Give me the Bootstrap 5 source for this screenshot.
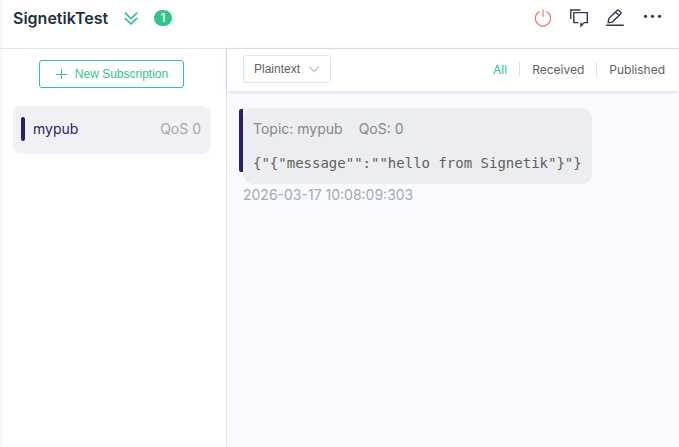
<!DOCTYPE html>
<html lang="en">
<head>
<meta charset="utf-8">
<meta name="viewport" content="width=device-width, initial-scale=1">
<title>SignetikTest</title>
<link href="https://cdn.jsdelivr.net/npm/bootstrap@5.3.0/dist/css/bootstrap.min.css" rel="stylesheet">
<style>
  body { font-family: Inter, "Liberation Sans", sans-serif; font-size: 14px; line-height: 20px; color: #606266; background: #fff; }
  .edge-shade { background: linear-gradient(to right, #f6f7fb, #fff 5px); }
  .rule-color { border-color: #e2e2ef !important; }
  .topbar { min-height: 49px; padding: 5px 16px 17px 13px; }
  .conn-name { font-size: 16px; line-height: 24px; font-weight: 600; color: #262e3f; }
  .icon-btn { padding: 0; border: 0; line-height: 0; color: #33384c; background: none; }
  .icon-btn.off { color: #f56c6c; }
  .green { color: #34c388; }
  .count { min-width: 18px; padding: 0 6px; font-size: 12px; line-height: 16px; font-weight: 500; background: #34c388; }
  .tools { gap: 18px; }
  .subs { width: 227px; padding: 11px 16px 16px 13px; }
  .new-sub { width: 145px; height: 28px; padding: 0; font: 12px/16px "Liberation Sans", Arial, sans-serif; color: #34c388; border: 1px solid #34c388; border-radius: 3px; background: #fff; }
  .new-sub:hover { color: #fff; background: #34c388; }
  .topic { margin-top: 18px; padding: 11px 9px 12px 8px; border: 0; border-radius: 8px; background: #f1f0f5; box-shadow: 0 1px 3px rgba(0,0,0,.05); }
  .topic-bar { width: 4px; height: 24px; border-radius: 2px; background: #282263; }
  .topic-name { color: #282263; }
  .faint { color: #a2a9b0; }
  .messages { background: #f9faff; }
  .filterbar { min-height: 42px; padding: 6px 14px 8px 16px; background: #fff; box-shadow: 0 1px 4px rgba(20,20,50,.14); }
  .format { width: 88px; height: 28px; padding: 0 24px 0 10px; font: 12px/16px "Liberation Sans", Arial, sans-serif; color: #606266; border: 1px solid #e2e2ef; border-radius: 3px;
    background: #fff url("data:image/svg+xml,%3Csvg xmlns='http://www.w3.org/2000/svg' width='12' height='12' viewBox='0 0 12 12'%3E%3Cpath d='M1 3.5l5 5 5-5' fill='none' stroke='%23c0c4cc' stroke-width='1.3'/%3E%3C/svg%3E") no-repeat right 10px center / 12px; }
  .filter { padding: 0 12px; border: 0; font-size: 12px; line-height: 15px; color: #606266; background: none; }
  .filter:last-child { padding-right: 0; }
  .filter + .filter { border-left: 1px solid #e2e2ef; }
  .filter.active { color: #34c388; }
  .feed { padding: 17px 16px 16px 12px; }
  .msg-bar { width: 4px; height: 63px; margin-top: 1px; border-radius: 2px 0 0 2px; background: #282263; }
  .bubble { padding: 11px 10px; border-radius: 10px; background: #ecedf1; color: #858689; }
  .payload { margin: 14px 0 0; font: 14px/20px "DejaVu Sans Mono", monospace; color: #606060; }
  .stamp { padding-left: 4px; margin-top: 1px; }
</style>
</head>
<body class="d-flex flex-column vh-100 edge-shade">
<header class="topbar d-flex align-items-center justify-content-between border-bottom rule-color">
  <div class="d-flex align-items-center">
    <h1 class="conn-name m-0">SignetikTest</h1>
    <button class="icon-btn green ms-3" type="button" aria-label="Expand">
      <svg width="14" height="14" viewBox="0 0 14 14" fill="none" stroke="currentColor" stroke-width="1.7"><path d="M.8 1.700 7 7.500l6.200-5.800M.8 7.100 7 12.900l6.200-5.800"/></svg>
    </button>
    <span class="count badge rounded-pill ms-3">1</span>
  </div>
  <div class="tools d-flex align-items-center">
    <button class="icon-btn off" type="button" aria-label="Disconnect">
      <svg width="18" height="18" viewBox="0 0 18 18" fill="none" stroke="currentColor" stroke-width="1.2"><path d="M9 .8v7M5.600 2.500a7.700 7.700 0 1 0 6.800 0"/></svg>
    </button>
    <button class="icon-btn" type="button" aria-label="New window">
      <svg width="18" height="18" viewBox="0 0 18 18" fill="none" stroke="currentColor" stroke-width="1.400"><path d="M.8 10V1H10.500M3.800 3.600h13.500v10h-3l-3.300 3.400v-3.400M8.500 13.600H3.800V3" /></svg>
    </button>
    <button class="icon-btn" type="button" aria-label="Edit">
      <svg width="18" height="18" viewBox="0 0 18 18" fill="none" stroke="currentColor" stroke-width="1.400"><path d="M.2 16.300h17.600M2.200 13.600l.6-4 8.200-8.100q1-.9 2 0l1.500 1.500q.9 1 0 2L6.300 13.100zM9.500 3l3.500 3.500"/></svg>
    </button>
    <button class="icon-btn" type="button" aria-label="More">
      <svg width="21" height="18" viewBox="0 0 21 18" fill="currentColor"><circle cx="3.500" cy="7.300" r="1.600"/><circle cx="10.500" cy="7.300" r="1.600"/><circle cx="17.500" cy="7.300" r="1.600"/></svg>
    </button>
  </div>
</header>
<main class="d-flex flex-grow-1">
  <aside class="subs flex-shrink-0 border-end rule-color">
    <div class="text-center">
      <button class="new-sub btn d-inline-flex align-items-center justify-content-center gap-2" type="button">
        <svg width="12" height="12" viewBox="0 0 12 12" fill="none" stroke="currentColor"><path d="M6.500 1v10M1 6.500h11"/></svg>New Subscription
      </button>
    </div>
    <div class="topic d-flex align-items-center">
      <span class="topic-bar me-2"></span>
      <span class="topic-name">mypub</span>
      <span class="faint ms-auto">QoS 0</span>
    </div>
  </aside>
  <section class="messages flex-grow-1">
    <div class="filterbar d-flex align-items-center justify-content-between">
      <select class="format form-select" aria-label="Payload format">
        <option>Plaintext</option><option>Base64</option><option>JSON</option><option>Hex</option>
      </select>
      <div class="d-flex align-items-center" role="group" aria-label="Message filter">
        <button class="filter active" type="button">All</button>
        <button class="filter" type="button">Received</button>
        <button class="filter" type="button">Published</button>
      </div>
    </div>
    <div class="feed">
      <div class="d-flex align-items-start">
        <span class="msg-bar flex-shrink-0"></span>
        <div class="bubble">
          <div class="d-flex gap-3"><span>Topic: mypub</span><span>QoS: 0</span></div>
          <pre class="payload">{"{"message"":""hello from Signetik"}"}</pre>
        </div>
      </div>
      <div class="stamp faint">2026-03-17 10:08:09:303</div>
    </div>
  </section>
</main>
<script src="https://cdn.jsdelivr.net/npm/bootstrap@5.3.0/dist/js/bootstrap.bundle.min.js"></script>
</body>
</html>
